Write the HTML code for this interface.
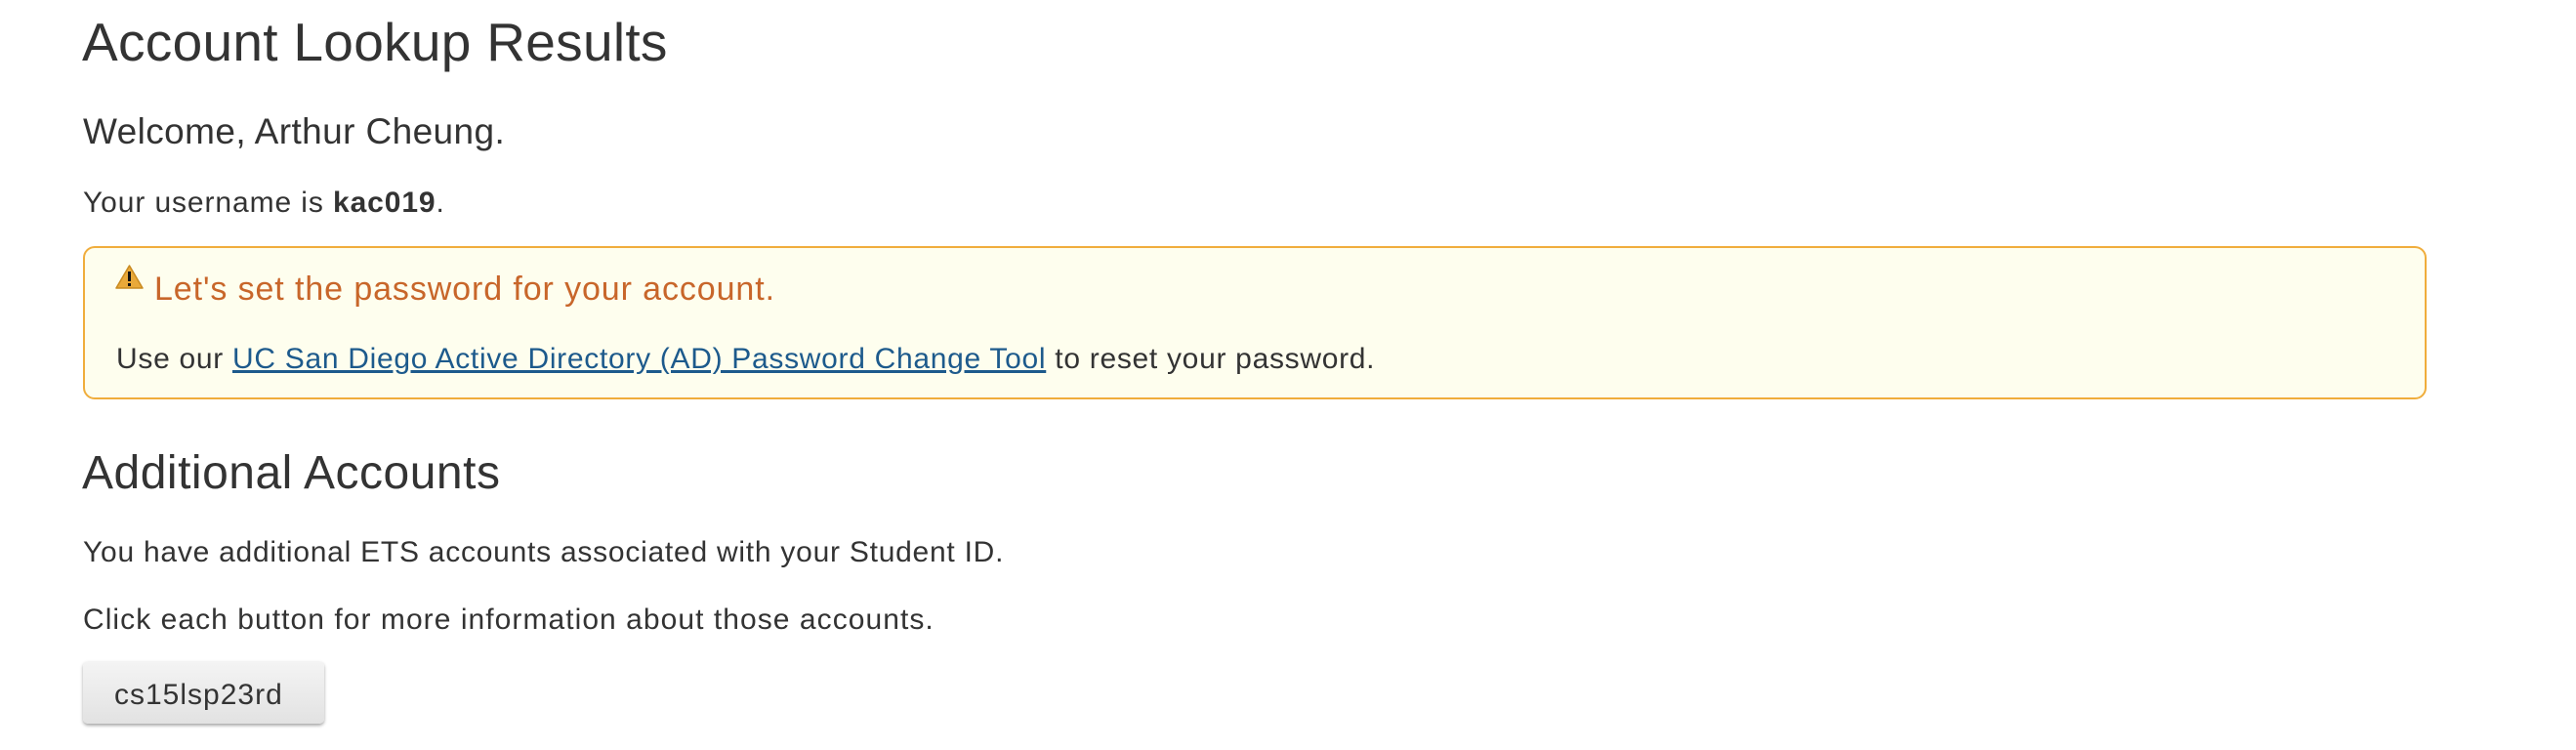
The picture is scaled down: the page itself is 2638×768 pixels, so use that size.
<!DOCTYPE html>
<html><head><meta charset="utf-8"><style>
html,body{margin:0;padding:0;background:#fff;width:2638px;height:768px;overflow:hidden;font-family:"Liberation Sans",Arial,sans-serif;color:#333}
.t{position:absolute;white-space:nowrap;line-height:1;margin:0}
.alert{position:absolute;left:85px;top:252px;width:2396px;height:153px;border:2px solid #f0ad3c;border-radius:12px;background:#fefeee}
.btn{position:absolute;left:85px;top:677px;width:247px;height:64px;border-radius:5px;background:linear-gradient(#f4f4f4,#e2e2e2);box-shadow:0 2px 3px rgba(0,0,0,.35)}
a{color:#1d5a8c;text-decoration:underline}
</style></head><body>
<div class="t" style="left:84px;top:16px;font-size:55px;letter-spacing:0.3px">Account Lookup Results</div>
<div class="t" style="left:85px;top:116px;font-size:37px;letter-spacing:0.4px">Welcome, Arthur Cheung.</div>
<div class="t" style="left:85px;top:193px;font-size:30px;letter-spacing:0.9px">Your username is <b>kac019</b>.</div>
<div class="alert"></div>
<svg style="position:absolute;left:118px;top:271px" width="29" height="25" viewBox="0 0 29 25"><path d="M14.5 1 L28 24 L1 24 Z" fill="#e9a93a" stroke="#c98a20" stroke-width="1.5" stroke-linejoin="round"/><rect x="13" y="7" width="3" height="10" fill="#111"/><rect x="13" y="19" width="3" height="3" fill="#111"/></svg>
<div class="t" style="left:158px;top:279px;font-size:34px;color:#c8662a;letter-spacing:0.9px">Let's set the password for your account.</div>
<div class="t" style="left:119px;top:353px;font-size:30px;letter-spacing:0.7px">Use our <a>UC San Diego Active Directory (AD) Password Change Tool</a> to reset your password.</div>
<div class="t" style="left:84px;top:461px;font-size:48px;letter-spacing:0.5px">Additional Accounts</div>
<div class="t" style="left:85px;top:551px;font-size:30px;letter-spacing:0.75px">You have additional ETS accounts associated with your Student ID.</div>
<div class="t" style="left:85px;top:620px;font-size:30px;letter-spacing:1.05px">Click each button for more information about those accounts.</div>
<div class="btn"></div>
<div class="t" style="left:117px;top:697px;font-size:30px;letter-spacing:1px">cs15lsp23rd</div>
</body></html>
